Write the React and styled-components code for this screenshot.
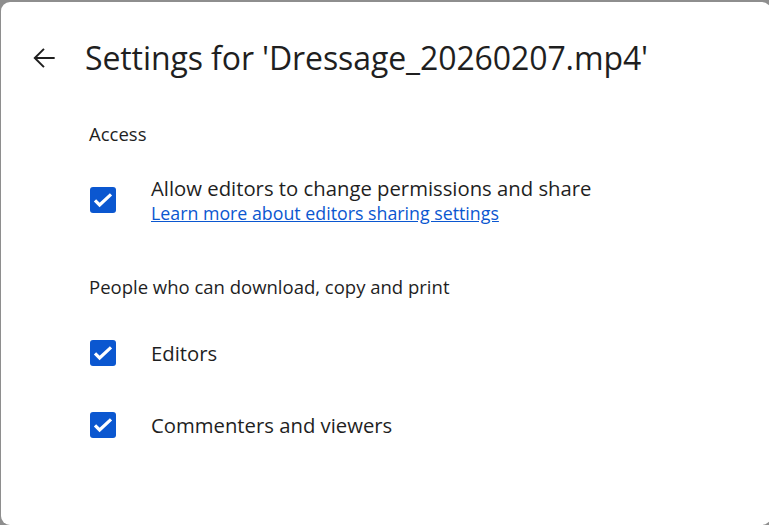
import React from 'react';
import styled, { createGlobalStyle } from 'styled-components';

const GlobalStyle = createGlobalStyle`
  html, body {
    margin: 0;
    padding: 0;
    background: #8e8e8e;
    overflow: hidden;
  }
  body {
    font-family: "Open Sans", Roboto, sans-serif;
    color: #1f1f1f;
  }
`;

const Screen = styled.div`
  width: 769px;
  height: 525px;
  padding: 2px 0 0 1px;
  box-sizing: border-box;
  overflow: hidden;
`;

const Dialog = styled.div`
  width: 770px;
  height: 523px;
  background: #fff;
  border-radius: 9px;
  padding-top: 32px;
  box-sizing: border-box;
`;

const Header = styled.div`
  display: flex;
  align-items: center;
  height: 48px;
  padding-left: 19px;
`;

const BackButton = styled.button`
  width: 48px;
  height: 48px;
  border: none;
  background: none;
  padding: 0;
  display: flex;
  align-items: center;
  justify-content: center;
  color: #1f1f1f;
  cursor: pointer;
`;

const Title = styled.h1`
  margin: 0 0 0 17px;
  font-size: 32px;
  font-weight: 400;
  line-height: 48px;
  letter-spacing: -0.1px;
`;

const Body = styled.div`
  padding: 40px 0 0 88px;
`;

const SectionLabel = styled.div`
  font-size: 18.5px;
  line-height: 24px;
  margin-top: ${p => p.$top || 0}px;
`;

const Option = styled.label`
  display: flex;
  align-items: center;
  gap: 35px;
  margin-top: ${p => p.$top || 0}px;
`;

const Box = styled.span`
  width: 26px;
  height: 26px;
  border-radius: 3px;
  background: #0b57d0;
  display: flex;
  align-items: center;
  justify-content: center;
  flex-shrink: 0;
  margin-left: 1px;
`;

const OptionText = styled.div`
  display: flex;
  flex-direction: column;
`;

const OptionLabel = styled.span`
  font-size: 20.3px;
  line-height: 26px;
`;

const HelpLink = styled.a`
  font-size: 17.8px;
  line-height: 24px;
  color: #0b57d0;
  text-decoration: underline;
`;

const Check = () => (
  <Box>
    <svg width="26" height="26" viewBox="0 0 26 26">
      <path d="M5 13.4l4.6 4.6L21 7.4" fill="none" stroke="#fff" strokeWidth="3.2" />
    </svg>
  </Box>
);

const App = () => (
  <Screen>
    <GlobalStyle />
    <Dialog>
      <Header>
        <BackButton aria-label="Back">
          <svg width="32" height="32" viewBox="0 0 24 24">
            <path d="M20 11.25H6.9l5.6-5.6L11.45 4.6 4.05 12l7.4 7.4 1.05-1.05-5.6-5.6H20v-1.5z" fill="currentColor" />
          </svg>
        </BackButton>
        <Title>Settings for 'Dressage_20260207.mp4'</Title>
      </Header>

      <Body>
        <SectionLabel>Access</SectionLabel>
        <Option $top={29}>
          <Check />
          <OptionText>
            <OptionLabel>Allow editors to change permissions and share</OptionLabel>
            <HelpLink href="#">Learn more about editors sharing settings</HelpLink>
          </OptionText>
        </Option>

        <SectionLabel $top={50}>People who can download, copy and print</SectionLabel>
        <Option $top={41}>
          <Check />
          <OptionLabel>Editors</OptionLabel>
        </Option>
        <Option $top={46}>
          <Check />
          <OptionLabel>Commenters and viewers</OptionLabel>
        </Option>
      </Body>
    </Dialog>
  </Screen>
);

export default App;
